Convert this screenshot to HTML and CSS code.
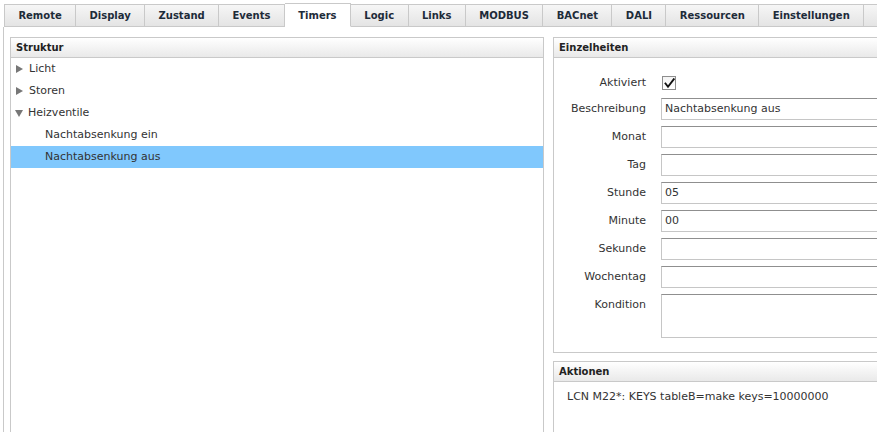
FILE: index.html
```html
<!DOCTYPE html>
<html lang="de">
<head>
<meta charset="utf-8">
<title>Timers</title>
<link rel="stylesheet" href="styles.css">
</head>
<body>
<div class="page">
  <ul class="tabs">
    <li class="tab">Remote</li>
    <li class="tab">Display</li>
    <li class="tab">Zustand</li>
    <li class="tab">Events</li>
    <li class="tab active">Timers</li>
    <li class="tab">Logic</li>
    <li class="tab">Links</li>
    <li class="tab">MODBUS</li>
    <li class="tab">BACnet</li>
    <li class="tab">DALI</li>
    <li class="tab">Ressourcen</li>
    <li class="tab">Einstellungen</li>
    <li class="tab">Info</li>
  </ul>
  <div class="content">
    <section class="panel tree-panel">
      <div class="panel-head">Struktur</div>
      <ul class="tree">
        <li class="node"><span class="arrow closed"></span>Licht</li>
        <li class="node"><span class="arrow closed"></span>Storen</li>
        <li class="node"><span class="arrow open"></span>Heizventile</li>
        <li class="node child">Nachtabsenkung ein</li>
        <li class="node child selected">Nachtabsenkung aus</li>
      </ul>
    </section>
    <div class="side">
      <section class="panel details">
        <div class="panel-head">Einzelheiten</div>
        <div class="form">
          <label class="lbl first">Aktiviert</label>
          <div class="check-cell">
            <span class="checkbox">
              <svg width="11" height="11" viewBox="0 0 11 11"><path d="M1.5 5.5 L4 8.8 L9.8 1.2" fill="none" stroke="#111" stroke-width="1.9" stroke-linecap="square"/></svg>
            </span>
          </div>
          <label class="lbl">Beschreibung</label>
          <div class="field">Nachtabsenkung aus</div>
          <label class="lbl">Monat</label>
          <div class="field"></div>
          <label class="lbl">Tag</label>
          <div class="field"></div>
          <label class="lbl">Stunde</label>
          <div class="field">05</div>
          <label class="lbl">Minute</label>
          <div class="field">00</div>
          <label class="lbl">Sekunde</label>
          <div class="field"></div>
          <label class="lbl">Wochentag</label>
          <div class="field"></div>
          <label class="lbl">Kondition</label>
          <div class="field area"></div>
        </div>
      </section>
      <section class="panel actions">
        <div class="panel-head">Aktionen</div>
        <div class="action-body">LCN M22*: KEYS tableB=make keys=10000000</div>
      </section>
    </div>
  </div>
</div>
</body>
</html>
```

FILE: styles.css
```css
* { box-sizing: border-box; }
html, body {
  margin: 0;
  padding: 0;
  background: #fff;
  width: 877px;
  height: 432px;
  overflow: hidden;
}
body {
  font-family: "DejaVu Sans", Verdana, sans-serif;
  font-size: 11px;
  color: #333;
}
.page {
  padding-top: 4px;
  width: 1000px;
}
.tabs {
  list-style: none;
  margin: 0;
  padding: 0 0 0 4px;
  display: flex;
  height: 23px;
}
.tab {
  height: 23px;
  line-height: 21px;
  padding: 0 13.4px;
  border: 1px solid #c9c9c9;
  border-left: none;
  background: linear-gradient(#f6f6f6, #e4e4e4);
  font-weight: bold;
  font-size: 10px;
  color: #1d2b39;
}
.tab:first-child { border-left: 1px solid #c9c9c9; }
.tab.active {
  background: #fff;
  border-bottom-color: #fff;
  height: 24px;
  margin-top: -1px;
  line-height: 24px;
}
.content {
  margin-left: 3px;
  border-left: 1px solid #c9c9c9;
  padding: 10px 0 0 6px;
  display: flex;
  gap: 9px;
  height: 420px;
}
.panel {
  border: 1px solid #c9c9c9;
  background: #fff;
}
.panel-head {
  height: 20px;
  line-height: 19px;
  padding-left: 5px;
  border-bottom: 1px solid #c9c9c9;
  background: linear-gradient(#ffffff, #e9e9e9);
  font-weight: bold;
  font-size: 10px;
  color: #222;
}
.tree-panel {
  width: 534px;
  flex: 0 0 534px;
  height: 450px;
}
.tree {
  list-style: none;
  margin: 0;
  padding: 0;
}
.node {
  height: 22px;
  line-height: 22px;
  padding-left: 5px;
  display: flex;
  align-items: center;
  color: #333;
}
.node.child { padding-left: 34px; }
.node.selected { background: #80c8fd; }
.arrow {
  width: 0;
  height: 0;
  margin-right: 6px;
}
.arrow.closed {
  border-left: 7px solid #777;
  border-top: 4px solid transparent;
  border-bottom: 4px solid transparent;
}
.arrow.open {
  border-top: 7px solid #777;
  border-left: 4px solid transparent;
  border-right: 4px solid transparent;
  margin-left: -1px;
  margin-right: 5px;
}
.side {
  display: flex;
  flex-direction: column;
  gap: 8px;
  width: 400px;
  flex: 0 0 400px;
}
.details { height: 316px; }
.form {
  display: grid;
  grid-template-columns: 92px 1fr;
  column-gap: 15px;
  row-gap: 6px;
  padding: 12px 0 0 0;
}
.lbl {
  text-align: right;
  line-height: 22px;
  height: 22px;
  color: #333;
}
.lbl.first { padding-top: 2px; }
.check-cell {
  height: 22px;
  display: flex;
  align-items: center;
  padding-left: 1px;
  padding-top: 4px;
}
.checkbox {
  width: 14px;
  height: 14px;
  border: 1px solid #8d8d8d;
  background: linear-gradient(#f4f4f4, #fff);
  display: flex;
  align-items: center;
  justify-content: center;
}
.field {
  height: 22px;
  line-height: 20px;
  border: 1px solid #c6c6c6;
  border-top-color: #8f8f8f;
  padding-left: 3px;
  color: #333;
}
.field.area { height: 44px; }
.actions { height: 80px; }
.action-body {
  padding: 8px 13px;
  line-height: 14px;
  color: #333;
}
```
